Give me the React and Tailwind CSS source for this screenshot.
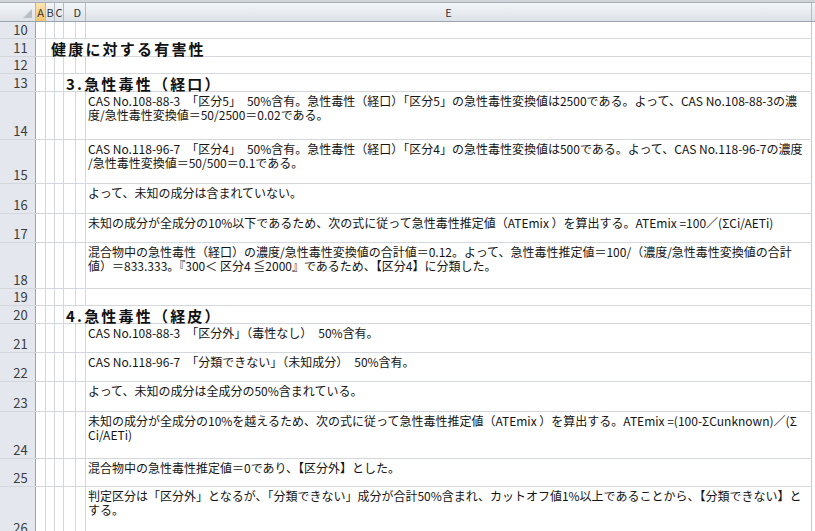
import React from 'react';

const font = { fontFamily: '"Noto Sans CJK JP", "Noto Sans", sans-serif' };

const rows = [
  { n: 10, h: 'h-[17px]' },
  { n: 11, h: 'h-[18px]', title: '健康に対する有害性', from: 1, pad: 'pl-[5px]' },
  { n: 12, h: 'h-[17px]' },
  { n: 13, h: 'h-[18px]', title: '3.急性毒性（経口）', from: 3, pad: 'pl-[2px]' },
  {
    n: 14,
    h: 'h-[48px]',
    lines: [
      'CAS No.108-88-3　「区分5」　50%含有。急性毒性（経口）「区分5」の急性毒性変換値は2500である。よって、CAS No.108-88-3の濃',
      '度/急性毒性変換値＝50/2500＝0.02である。',
    ],
  },
  {
    n: 15,
    h: 'h-[44px]',
    lines: [
      'CAS No.118-96-7　「区分4」　50%含有。急性毒性（経口）「区分4」の急性毒性変換値は500である。よって、CAS No.118-96-7の濃度',
      '/急性毒性変換値＝50/500＝0.1である。',
    ],
  },
  { n: 16, h: 'h-[30px]', lines: ['よって、未知の成分は含まれていない。'] },
  {
    n: 17,
    h: 'h-[29px]',
    lines: ['未知の成分が全成分の10%以下であるため、次の式に従って急性毒性推定値（ATEmix ）を算出する。ATEmix =100／(ΣCi/AETi)'],
  },
  {
    n: 18,
    h: 'h-[46px]',
    lines: [
      '混合物中の急性毒性（経口）の濃度/急性毒性変換値の合計値＝0.12。よって、急性毒性推定値＝100/（濃度/急性毒性変換値の合計',
      '値）＝833.333。『300＜ 区分4 ≦2000』であるため、【区分4】に分類した。',
    ],
  },
  { n: 19, h: 'h-[17px]' },
  { n: 20, h: 'h-[18px]', title: '4.急性毒性（経皮）', from: 3, pad: 'pl-[2px]' },
  { n: 21, h: 'h-[29px]', lines: ['CAS No.108-88-3　「区分外」（毒性なし）　50%含有。'] },
  { n: 22, h: 'h-[29px]', lines: ['CAS No.118-96-7　「分類できない」（未知成分）　50%含有。'] },
  { n: 23, h: 'h-[30px]', lines: ['よって、未知の成分は全成分の50%含まれている。'] },
  {
    n: 24,
    h: 'h-[47px]',
    lines: [
      '未知の成分が全成分の10%を越えるため、次の式に従って急性毒性推定値（ATEmix ）を算出する。ATEmix =(100-ΣCunknown)／(Σ',
      'Ci/AETi)',
    ],
  },
  { n: 25, h: 'h-[28px]', lines: ['混合物中の急性毒性推定値＝0であり、【区分外】とした。'] },
  {
    n: 26,
    h: 'h-[50px]',
    lines: [
      '判定区分は「区分外」となるが、「分類できない」成分が合計50%含まれ、カットオフ値1%以上であることから、【分類できない】と',
      'する。',
    ],
  },
];

// narrow columns A..D (D drawn with an inner line like the sheet)
const narrow = ['w-[10px]', 'w-[9px]', 'w-[9px]', 'w-[12px]', 'w-[10px]'];

const RowHeader = ({ n }) => (
  <div className="w-[36px] shrink-0 h-full flex items-end justify-center pl-[6px] bg-[#e4e8ee] border-r border-[#9aa3ae] text-[13px] leading-[16px] text-[#3c3c3c]">
    {n}
  </div>
);

const Row = ({ row }) => {
  if (row.title) {
    return (
      <div className={`flex ${row.h} border-b border-[#d4d7db]`}>
        <RowHeader n={row.n} />
        {narrow.slice(0, row.from).map((w, i) => (
          <div key={i} className={`${w} shrink-0 h-full border-r border-[#d4d7db]`} />
        ))}
        <div className={`flex-1 h-full flex items-end ${row.pad} border-r border-[#c4c8cd] whitespace-nowrap`}>
          <span className="text-[15px] leading-[14px] font-bold tracking-[2.2px] text-[#111]">{row.title}</span>
        </div>
      </div>
    );
  }
  return (
    <div className={`flex ${row.h} border-b border-[#d4d7db]`}>
      <RowHeader n={row.n} />
      {narrow.map((w, i) => (
        <div key={i} className={`${w} shrink-0 h-full border-r border-[#d4d7db]`} />
      ))}
      <div className="flex-1 h-full pl-[2px] pt-[2px] border-r border-[#c4c8cd] overflow-hidden whitespace-nowrap text-[12px] leading-[14px] text-[#141414]">
        {row.lines && row.lines.map((l, i) => <div key={i}>{l}</div>)}
      </div>
    </div>
  );
};

export default function App() {
  return (
    <div className="w-[815px] h-[531px] overflow-hidden bg-white flex flex-col" style={font}>
      <div className="h-[3px] shrink-0 bg-[#cfd4da] border-b border-[#a9b0b8]" />
      <div className="flex h-[19px] shrink-0 border-b border-[#9aa3ae] bg-gradient-to-b from-[#f3f5f8] to-[#dde2e8] text-[11px] text-[#333]">
        <div className="w-[36px] shrink-0 relative border-r border-[#b3bac3]">
          <svg className="absolute right-[3px] bottom-[3px]" width="9" height="9" viewBox="0 0 9 9">
            <polygon points="9,0 9,9 0,9" fill="#b8bec6" />
          </svg>
        </div>
        <div className="w-[10px] shrink-0 flex items-center justify-center bg-gradient-to-b from-[#fbe4b2] to-[#f4c66d] border-r border-[#b3bac3]">A</div>
        <div className="w-[9px] shrink-0 flex items-center justify-center border-r border-[#b3bac3]">B</div>
        <div className="w-[9px] shrink-0 flex items-center justify-center border-r border-[#b3bac3]">C</div>
        <div className="w-[22px] shrink-0 flex items-center justify-end pr-[4px] border-r border-[#b3bac3]">D</div>
        <div className="flex-1 flex items-center justify-center border-r border-[#b3bac3]">E</div>
        <div className="w-[3px] shrink-0" />
      </div>
      {rows.map((r) => (
        <div key={r.n} className="flex">
          <div className="flex-1">
            <Row row={r} />
          </div>
          <div className="w-[3px] shrink-0" />
        </div>
      ))}
    </div>
  );
}
